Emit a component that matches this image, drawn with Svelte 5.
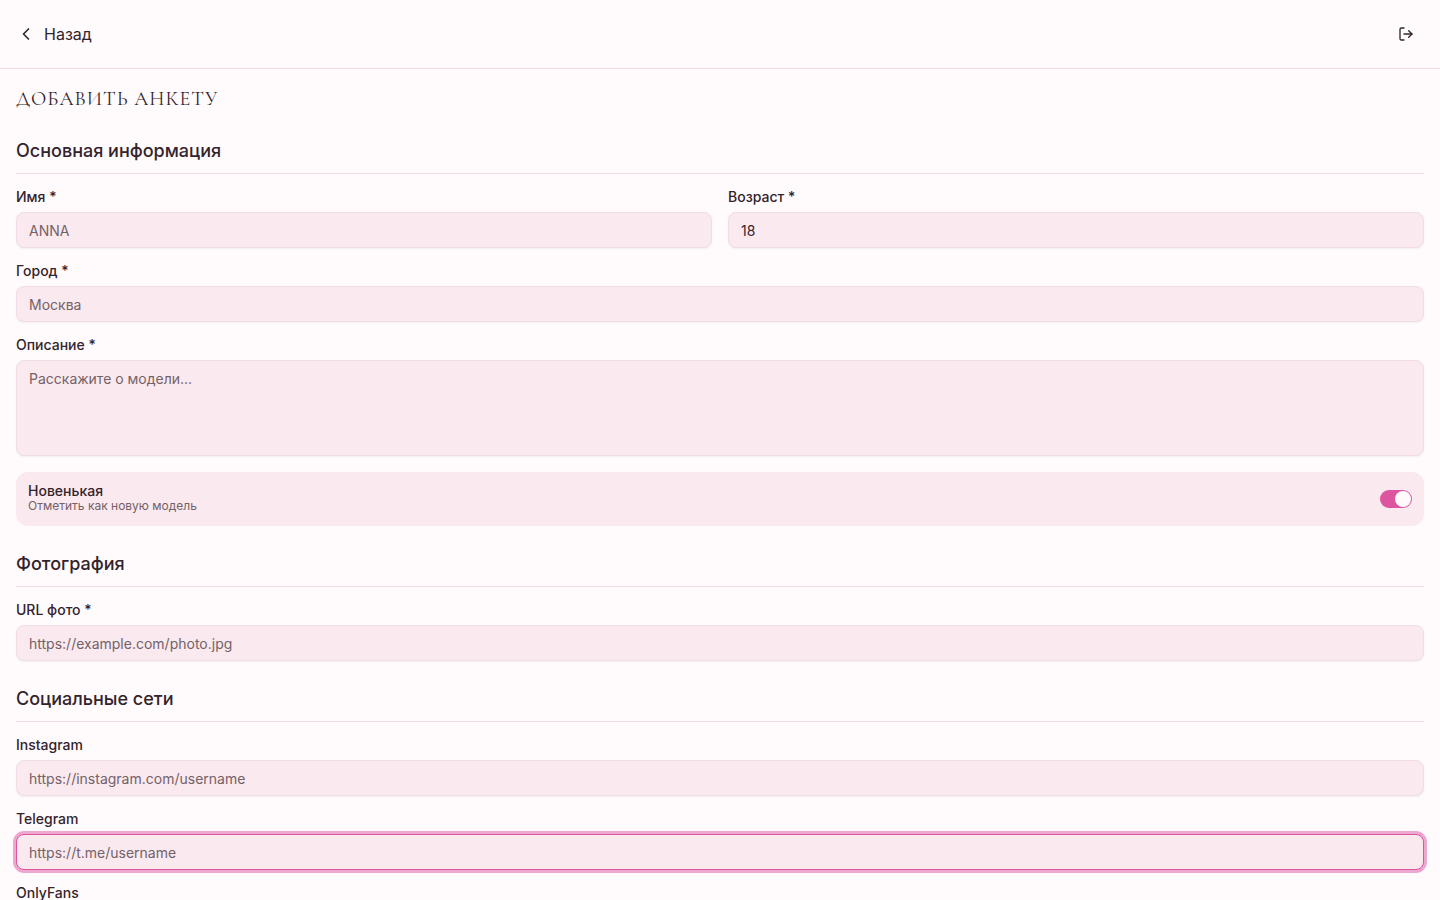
<script>
  let form = $state({
    name: "",
    age: 18,
    city: "",
    description: "",
    isNew: true,
    photo: "",
    instagram: "",
    telegram: "",
    onlyfans: "",
  });
</script>

{#snippet field(key, label, placeholder, type = "text", autofocus = false)}
  <div class="field">
    <label for={key}>{label}</label>
    <!-- svelte-ignore a11y_autofocus -->
    <input id={key} {type} {placeholder} {autofocus} bind:value={form[key]} />
  </div>
{/snippet}

<div class="page">
  <header>
    <button class="back" type="button">
      <svg class="icon" viewBox="0 0 24 24" aria-hidden="true">
        <path d="m15 18-6-6 6-6" />
      </svg>
      Назад
    </button>
    <button class="logout" type="button" aria-label="Выйти">
      <svg class="icon" viewBox="0 0 24 24" aria-hidden="true">
        <path d="m16 17 5-5-5-5" />
        <path d="M21 12H9" />
        <path d="M9 21H5a2 2 0 0 1-2-2V5a2 2 0 0 1 2-2h4" />
      </svg>
    </button>
  </header>

  <main>
    <h1>ДОБАВИТЬ АНКЕТУ</h1>

    <form>
      <section>
        <h2>Основная информация</h2>
        <div class="row">
          {@render field("name", "Имя *", "ANNA")}
          {@render field("age", "Возраст *", "", "number")}
        </div>
        {@render field("city", "Город *", "Москва")}
        <div class="field">
          <label for="description">Описание *</label>
          <textarea id="description" placeholder="Расскажите о модели..." bind:value={form.description}></textarea>
        </div>
        <div class="toggle">
          <div>
            <label for="isNew">Новенькая</label>
            <p id="isNew-hint">Отметить как новую модель</p>
          </div>
          <input
            id="isNew"
            class="switch"
            type="checkbox"
            role="switch"
            aria-describedby="isNew-hint"
            bind:checked={form.isNew}
          />
        </div>
      </section>

      <section>
        <h2>Фотография</h2>
        {@render field("photo", "URL фото *", "https://example.com/photo.jpg", "url")}
      </section>

      <section>
        <h2>Социальные сети</h2>
        {@render field("instagram", "Instagram", "https://instagram.com/username")}
        {@render field("telegram", "Telegram", "https://t.me/username", "text", true)}
        {@render field("onlyfans", "OnlyFans", "")}
      </section>
    </form>
  </main>
</div>

<style>
  :global(body) {
    margin: 0;
    background: #fffbfd;
  }

  .page {
    --fg: #33232b;
    --muted: #736269;
    --field: #fae9ee;
    --border: #f0dce4;
    --primary: #dd559f;

    color: var(--fg);
    font-family: Inter, "Noto Sans", sans-serif;
    font-size: 16px;
    line-height: 24px;
    -webkit-font-smoothing: antialiased;
  }

  header {
    display: flex;
    align-items: center;
    justify-content: space-between;
    padding: 16px;
    border-bottom: 1px solid var(--border);
  }

  button {
    display: flex;
    align-items: center;
    height: 36px;
    padding: 0;
    border: 0;
    border-radius: 8px;
    background: transparent;
    color: inherit;
    font: inherit;
    cursor: pointer;
  }

  .back {
    gap: 8px;
  }

  .back .icon {
    width: 20px;
    height: 20px;
  }

  .logout {
    justify-content: center;
    width: 36px;
  }

  .icon {
    width: 16px;
    height: 16px;
    fill: none;
    stroke: currentColor;
    stroke-width: 2;
    stroke-linecap: round;
    stroke-linejoin: round;
  }

  main {
    padding: 16px;
  }

  h1 {
    margin: 0 0 24px;
    font-family: "Cormorant Garamond", Cormorant, "Liberation Serif", serif;
    font-size: 20px;
    font-weight: 400;
    line-height: 28px;
    letter-spacing: 1px;
  }

  form {
    display: flex;
    flex-direction: column;
    gap: 24px;
  }

  section {
    display: flex;
    flex-direction: column;
    gap: 16px;
  }

  h2 {
    margin: 0;
    padding-bottom: 8px;
    border-bottom: 1px solid var(--border);
    font-size: 18px;
    font-weight: 500;
    line-height: 28px;
  }

  .row {
    display: grid;
    grid-template-columns: 1fr 1fr;
    gap: 16px;
  }

  .field {
    display: flex;
    flex-direction: column;
    gap: 8px;
  }

  label {
    display: block;
    font-size: 14px;
    font-weight: 500;
    line-height: 14px;
  }

  .field input,
  textarea {
    box-sizing: border-box;
    width: 100%;
    height: 36px;
    padding: 4px 12px;
    border: 1px solid var(--border);
    border-radius: 8px;
    outline: none;
    background: var(--field);
    box-shadow: 0 1px 2px rgb(0 0 0 / 5%);
    color: var(--fg);
    font: inherit;
    font-size: 14px;
    line-height: 20px;
    appearance: textfield;
  }

  textarea {
    display: block;
    height: 96px;
    padding: 8px 12px;
    resize: none;
  }

  .field input::placeholder,
  textarea::placeholder {
    color: var(--muted);
    opacity: 1;
  }

  .field input:focus-visible,
  textarea:focus-visible {
    border-color: var(--primary);
    box-shadow: 0 0 0 3px #eea8cf;
  }

  .toggle {
    display: flex;
    align-items: center;
    justify-content: space-between;
    padding: 12px;
    border-radius: 12px;
    background: var(--field);
  }

  .toggle p {
    margin: 0;
    color: var(--muted);
    font-size: 12px;
    line-height: 16px;
  }

  .switch {
    display: flex;
    align-items: center;
    box-sizing: border-box;
    width: 32px;
    height: 18px;
    margin: 0;
    padding: 0 1px;
    border-radius: 9px;
    appearance: none;
    background: var(--border);
    cursor: pointer;
  }

  .switch::before {
    content: "";
    width: 16px;
    height: 16px;
    border-radius: 50%;
    background: #fffbfd;
  }

  .switch:checked {
    justify-content: flex-end;
    background: var(--primary);
  }
</style>
